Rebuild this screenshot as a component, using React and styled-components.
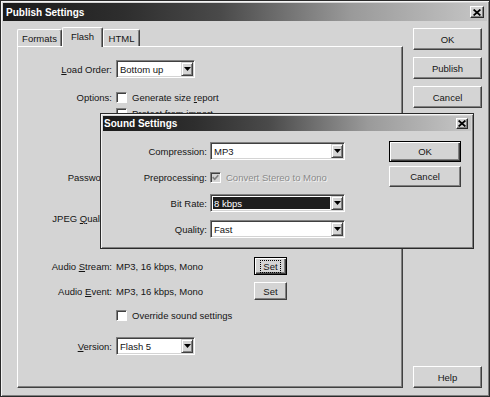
import React from 'react';
import styled, { createGlobalStyle, css } from 'styled-components';

const FACE = '#d4d4d4';

const Global = createGlobalStyle`
  html, body { margin: 0; padding: 0; background: ${FACE}; }
  body {
    font-family: "Liberation Sans", Arial, sans-serif;
    font-size: 9.5px;
    color: #141414;
  }
  * { box-sizing: border-box; }
`;

const windowFrame = css`
  background: ${FACE};
  border: 1px solid #2a2a2a;
  box-shadow: inset 1px 1px #f4f4f4, inset -1px -1px #808080;
  padding: 2px;
  display: flex;
  flex-direction: column;
`;

const Window = styled.div`
  ${windowFrame};
  position: relative;
  width: 490px;
  height: 397px;
`;

const Dialog = styled.div`
  ${windowFrame};
  position: absolute;
  left: 99px;
  top: 112px;
  width: 374px;
  height: 136px;
  z-index: 5;
`;

const TitleBar = styled.div`
  flex: none;
  height: ${(p) => p.$h}px;
  display: flex;
  align-items: center;
  justify-content: space-between;
  padding: 0 ${(p) => p.$pr}px 0 ${(p) => p.$pl}px;
  background: linear-gradient(90deg, #1a1a1a 0%, #2e2e2e 25%, #4a4a4a 45%, #9a9a9a 72%, #c6c6c6 100%);
`;

const TitleText = styled.span`
  color: #fff;
  font-weight: bold;
  font-size: 10px;
  white-space: nowrap;
`;

const CloseButton = styled.div`
  width: ${(p) => p.$w}px;
  height: ${(p) => p.$h}px;
  background: ${FACE};
  border: 1px solid;
  border-color: #fff #2a2a2a #2a2a2a #fff;
  box-shadow: inset -1px -1px #808080;
  display: flex;
  align-items: center;
  justify-content: center;
`;

const Body = styled.div`
  flex: 1;
  display: flex;
  gap: 10px;
  padding: 6px 5px 6px 14px;
`;

const MainColumn = styled.div`
  width: 386px;
  display: flex;
  flex-direction: column;
`;

const TabRow = styled.div`
  height: 19px;
  display: flex;
  align-items: flex-end;
`;

const Tab = styled.div`
  width: ${(p) => p.$w}px;
  height: ${(p) => (p.$active ? 20 : 17)}px;
  margin-bottom: ${(p) => (p.$active ? -1 : 0)}px;
  padding-bottom: ${(p) => (p.$active ? 2 : 0)}px;
  z-index: ${(p) => (p.$active ? 2 : 0)};
  display: flex;
  align-items: center;
  justify-content: center;
  background: ${FACE};
  border-top: 1px solid #fff;
  border-left: 1px solid #fff;
  border-right: 1px solid #404040;
  box-shadow: inset -1px 0 #808080;
  border-radius: 2px 2px 0 0;
  white-space: nowrap;
`;

const Panel = styled.div`
  flex: 1;
  display: flex;
  flex-direction: column;
  border: 1px solid;
  border-color: #fff #404040 #404040 #fff;
  box-shadow: inset -1px -1px #808080;
`;

const Row = styled.div`
  display: grid;
  grid-template-columns: 94px ${(p) => p.$cols || '1fr'};
  column-gap: 4px;
  align-items: center;
  height: ${(p) => p.$h}px;
  margin-top: ${(p) => p.$mt || 0}px;
`;

const Label = styled.span`
  text-align: right;
  white-space: nowrap;
`;

const Value = styled.span`
  white-space: nowrap;
`;

const U = styled.span`
  text-decoration: underline;
  text-underline-offset: 1px;
`;

const CheckLine = styled.div`
  display: flex;
  align-items: center;
  gap: 5px;
  white-space: nowrap;
  ${(p) =>
    p.$disabled &&
    css`
      color: #8a8a8a;
      text-shadow: 1px 1px #f2f2f2;
    `}
`;

const Box = styled.div`
  flex: none;
  width: 11px;
  height: 11px;
  background: ${(p) => (p.$disabled ? FACE : '#fff')};
  border: 1px solid;
  border-color: #808080 #fff #fff #808080;
  box-shadow: inset 1px 1px #404040;
  display: flex;
  align-items: center;
  justify-content: center;
`;

const Field = styled.div`
  width: ${(p) => p.$w}px;
  height: 18px;
  display: flex;
  background: #fff;
  border: 1px solid;
  border-color: #808080 #fff #fff #808080;
  box-shadow: inset 1px 1px #404040, inset -1px -1px ${FACE};
  padding: 1px;
`;

const FieldText = styled.div`
  flex: 1;
  display: flex;
  align-items: center;
  padding-left: 2px;
  white-space: nowrap;
  ${(p) =>
    p.$selected &&
    css`
      background: #1e1e1e;
      color: #fff;
      margin: 1px;
      padding-left: 1px;
    `}
`;

const ArrowBtn = styled.div`
  flex: none;
  width: 12px;
  background: ${FACE};
  border: 1px solid;
  border-color: ${FACE} #404040 #404040 ${FACE};
  box-shadow: inset 1px 1px #fff, inset -1px -1px #808080;
  display: flex;
  align-items: center;
  justify-content: center;
`;

const Track = styled.div`
  width: 120px;
  height: 4px;
  border: 1px solid;
  border-color: #808080 #fff #fff #808080;
`;

const Button = styled.div`
  flex: none;
  width: ${(p) => p.$w}px;
  height: ${(p) => p.$h}px;
  background: ${FACE};
  display: flex;
  align-items: center;
  justify-content: center;
  white-space: nowrap;
  border: 1px solid;
  ${(p) =>
    p.$default
      ? css`
          border-color: #000;
          box-shadow: inset 1px 1px #fff, inset -1px -1px #404040, inset -2px -2px #808080;
        `
      : css`
          border-color: #fff #404040 #404040 #fff;
          box-shadow: inset -1px -1px #808080;
        `}
  ${(p) => p.$push && css`margin-top: auto;`}
`;

const FocusRing = styled.span`
  border: 1px dotted #000;
  padding: 0 2px;
  line-height: 11px;
`;

const ButtonColumn = styled.div`
  width: 69px;
  display: flex;
  flex-direction: column;
  gap: 7px;
  padding-top: 1px;
`;

const DialogBody = styled.div`
  flex: 1;
  display: flex;
  padding-top: 10px;
`;

const FormGrid = styled.div`
  display: grid;
  grid-template-columns: 104px 135px;
  grid-auto-rows: 18px;
  column-gap: 3px;
  row-gap: 8px;
  align-items: center;
  padding-top: 1px;
`;

const DialogButtons = styled.div`
  margin-left: 44px;
  display: flex;
  flex-direction: column;
  gap: 4px;
`;

const CloseGlyph = () => (
  <svg width="8" height="7" viewBox="0 0 8 7">
    <path d="M0.6 0.5 L7.4 6.5 M7.4 0.5 L0.6 6.5" stroke="#000" strokeWidth="1.7" fill="none" />
  </svg>
);

const ArrowGlyph = () => (
  <svg width="7" height="4" viewBox="0 0 7 4">
    <polygon points="0,0 7,0 3.5,4" fill="#000" />
  </svg>
);

const CheckGlyph = ({ color }) => (
  <svg width="7" height="7" viewBox="0 0 7 7">
    <path d="M0.7 3.2 L2.7 5.3 L6.3 1.2" stroke={color} strokeWidth="1.7" fill="none" />
  </svg>
);

function Select({ w, value, selected }) {
  return (
    <Field $w={w}>
      <FieldText $selected={selected}>{value}</FieldText>
      <ArrowBtn>
        <ArrowGlyph />
      </ArrowBtn>
    </Field>
  );
}

function Check({ label, checked, disabled }) {
  return (
    <CheckLine $disabled={disabled}>
      <Box $disabled={disabled}>{checked && <CheckGlyph color={disabled ? '#808080' : '#000'} />}</Box>
      {label && <span>{label}</span>}
    </CheckLine>
  );
}

export default function App() {
  return (
    <>
      <Global />
      <Window>
        <TitleBar $h={18} $pl={3} $pr={3}>
          <TitleText>Publish Settings</TitleText>
          <CloseButton $w={14} $h={12}>
            <CloseGlyph />
          </CloseButton>
        </TitleBar>
        <Body>
          <MainColumn>
            <TabRow>
              <Tab $w={45}>Formats</Tab>
              <Tab $w={41} $active>
                Flash
              </Tab>
              <Tab $w={37}>HTML</Tab>
            </TabRow>
            <Panel>
              <Row $mt={13} $h={18}>
                <Label>
                  <U>L</U>oad Order:
                </Label>
                <Select w={79} value="Bottom up" />
              </Row>
              <Row $mt={11} $h={16}>
                <Label>Options:</Label>
                <Check
                  label={
                    <>
                      Generate size <U>r</U>eport
                    </>
                  }
                />
              </Row>
              <Row $h={16}>
                <span />
                <Check label="Protect from import" />
              </Row>
              <Row $h={16}>
                <span />
                <Check />
              </Row>
              <Row $h={16}>
                <span />
                <Check />
              </Row>
              <Row $mt={15} $h={18} $cols="110px">
                <Label>Password:</Label>
                <Field $w={110} />
              </Row>
              <Row $mt={20} $h={24}>
                <Label>
                  JPEG <U>Q</U>uality:
                </Label>
                <Track />
              </Row>
              <Row $mt={27} $h={18} $cols="134px 33px">
                <Label>
                  Audio <U>S</U>tream:
                </Label>
                <Value>MP3, 16 kbps, Mono</Value>
                <Button $w={33} $h={18} $default>
                  <FocusRing>Set</FocusRing>
                </Button>
              </Row>
              <Row $mt={7} $h={18} $cols="134px 33px">
                <Label>
                  Audio <U>E</U>vent:
                </Label>
                <Value>MP3, 16 kbps, Mono</Value>
                <Button $w={33} $h={18}>
                  Set
                </Button>
              </Row>
              <Row $mt={7} $h={16}>
                <span />
                <Check label="Override sound settings" />
              </Row>
              <Row $mt={14} $h={18}>
                <Label>
                  <U>V</U>ersion:
                </Label>
                <Select w={79} value="Flash 5" />
              </Row>
            </Panel>
          </MainColumn>
          <ButtonColumn>
            <Button $w={69} $h={22}>OK</Button>
            <Button $w={69} $h={22}>Publish</Button>
            <Button $w={69} $h={22}>Cancel</Button>
            <Button $w={69} $h={22} $push>
              Help
            </Button>
          </ButtonColumn>
        </Body>

        <Dialog>
          <TitleBar $h={15} $pl={1} $pr={3}>
            <TitleText>Sound Settings</TitleText>
            <CloseButton $w={12} $h={11}>
              <CloseGlyph />
            </CloseButton>
          </TitleBar>
          <DialogBody>
            <FormGrid>
              <Label>Compression:</Label>
              <Select w={135} value="MP3" />
              <Label>Preprocessing:</Label>
              <Check disabled checked label="Convert Stereo to Mono" />
              <Label>Bit Rate:</Label>
              <Select w={135} value="8 kbps" selected />
              <Label>Quality:</Label>
              <Select w={135} value="Fast" />
            </FormGrid>
            <DialogButtons>
              <Button $w={72} $h={21} $default>
                OK
              </Button>
              <Button $w={72} $h={21}>Cancel</Button>
            </DialogButtons>
          </DialogBody>
        </Dialog>
      </Window>
    </>
  );
}
